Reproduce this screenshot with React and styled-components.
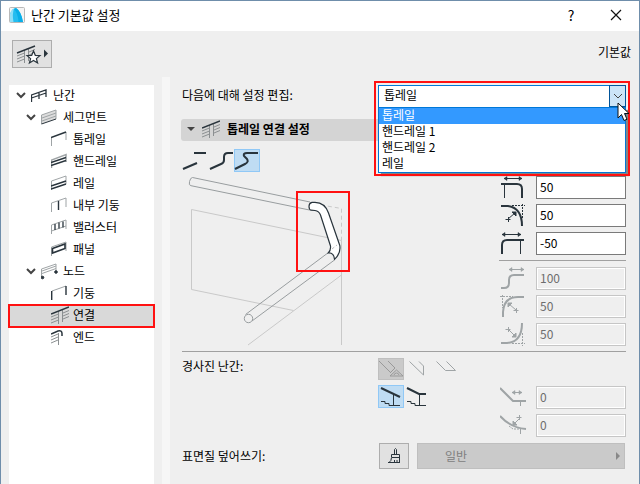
import React, { useState } from "react";
import styled, { createGlobalStyle, css } from "styled-components";

const GlobalStyle = createGlobalStyle`
  *, *::before, *::after { box-sizing: border-box; }
  body {
    margin: 0;
    background: #efefef;
    color: #000;
    font: 12px/16px "Noto Sans CJK KR", "Noto Sans", sans-serif;
  }
  button, input, select { font: inherit; color: inherit; margin: 0; }
`;

const DialogWindow = styled.div`
  display: flex;
  flex-direction: column;
  min-height: 100vh;
  border: 1px solid #6f8eab;
  border-bottom: 0;
  background: #efefef;
`;

const TitleBar = styled.header`
  display: flex;
  align-items: center;
  height: 30px;
  padding: 0 8px 2px;
  gap: 6px;
  background: #fff;
`;

const Title = styled.h1`
  flex: 1;
  margin: 0;
  font-size: 13px;
  line-height: 18px;
  font-weight: 400;
`;

const CaptionButton = styled.button`
  display: flex;
  align-items: center;
  justify-content: center;
  width: 30px;
  height: 28px;
  margin-left: 9px;
  padding: 0;
  border: 0;
  background: transparent;
  font-size: 14px;
`;

const Toolbar = styled.div`
  display: flex;
  align-items: flex-start;
  justify-content: space-between;
  height: 46px;
  padding: 9px 8px 0 11px;
`;

const FavoriteButton = styled.button`
  width: 40px;
  height: 28px;
  padding: 0;
  border: 1px solid #adadad;
  background: #e1e1e1;
  svg { display: block; margin: -1px; }
`;

const DefaultLabel = styled.span`
  padding-top: 4px;
`;

const Body = styled.div`
  display: flex;
  flex: 1;
`;

const Tree = styled.nav`
  flex: 0 0 145px;
  margin: 8px 8px 0;
  background: #fff;
`;

const TreeRow = styled.button`
  display: flex;
  align-items: center;
  width: 100%;
  height: 22px;
  padding: 0 0 3px ${(p) => 7 + p.$level * 10}px;
  border: 0;
  text-align: left;
  background: ${(p) => (p.$selected ? "#d9d9d9" : "transparent")};
  ${(p) => p.$selected && css`
    outline: 2px solid #f11;
    outline-offset: -1px;
  `}
`;

const Chevron = styled.span`
  display: flex;
  width: 10px;
  margin-right: 5px;
`;

const TreeLabel = styled.span`
  margin-left: 4px;
`;

const Splitter = styled.div`
  flex: 0 0 8px;
  background: #f6f6f6;
`;

const Content = styled.main`
  flex: 1;
  min-width: 0;
  padding: 8px 13px 0 11px;
`;

const FormRow = styled.div`
  display: flex;
  justify-content: space-between;
  align-items: center;
  padding-left: 1px;
`;

const Label = styled.label`
  padding-bottom: ${(p) => p.$bottom || 0}px;
`;

const ComboBox = styled.div`
  position: relative;
  width: 248px;
  height: 22px;
`;

const ComboSelect = styled.select`
  appearance: none;
  display: block;
  width: 100%;
  height: 23px;
  padding: 0 24px 3px 5px;
  border: 1px solid #0078d7;
  border-radius: 0;
  background: #fff;
  outline: 0;
`;

const ComboArrow = styled.span`
  position: absolute;
  top: 0;
  right: 0;
  display: flex;
  align-items: center;
  justify-content: center;
  width: 17px;
  height: 22px;
  border: 1px solid #005499;
  background: #cce4f7;
  pointer-events: none;
`;

const ComboList = styled.ul`
  position: absolute;
  z-index: 1;
  top: 22px;
  left: 0;
  right: 0;
  margin: 0;
  padding: 0;
  border: 1px solid #0078d7;
  background: #fff;
  box-shadow: 3px 3px 1px #858585;
  list-style: none;
`;

const ComboOption = styled.li`
  height: 16px;
  padding-left: 3px;
  line-height: 13px;
  color: ${(p) => (p.$selected ? "#fff" : "#000")};
  background: ${(p) => (p.$selected ? "#3399ff" : "#fff")};
`;

const Callout = styled.div`
  position: absolute;
  z-index: 2;
  inset: -4px -4px -69px;
  border: 2px solid #f11;
  pointer-events: none;
`;

const Pointer = styled.svg`
  position: absolute;
  z-index: 3;
  top: 17px;
  right: -4px;
  pointer-events: none;
`;

const SectionHeader = styled.button`
  display: flex;
  align-items: center;
  width: 100%;
  height: 22px;
  margin-top: 12px;
  padding: 0 6px 2px;
  gap: 7px;
  border: 0;
  border-radius: 3px;
  background: #d4d4d4;
  text-align: left;
  font-weight: 700;
`;

const Columns = styled.div`
  display: flex;
  justify-content: space-between;
  padding: ${(p) => p.$top}px 0 5px 1px;
`;

const ButtonRow = styled.div`
  display: flex;
  margin-bottom: ${(p) => p.$gap || 0}px;
`;

const ToggleButton = styled.button`
  width: 26px;
  height: ${(p) => p.$height || 23}px;
  padding: 0;
  border: 1px solid ${(p) => (p.$state === "on" ? "#90c8f6" : p.$state === "off" ? "#bfbfbf" : "transparent")};
  background: ${(p) => (p.$state === "on" ? "#bfdcf3" : p.$state === "off" ? "#cacaca" : "transparent")};
  svg { display: block; margin: -1px; }
`;

const Preview = styled.svg`
  display: block;
`;

const Fields = styled.div`
  display: flex;
  flex-direction: column;
  gap: 5px;
  width: 127px;
  padding-top: ${(p) => p.$top}px;
`;

const Field = styled.label`
  display: flex;
  justify-content: space-between;
  height: 23px;
  svg { flex: none; margin-left: 1px; }
`;

const NumberInput = styled.input`
  width: 90px;
  height: 23px;
  padding: 0 3px 3px;
  border: 1px solid #7a7a7a;
  border-radius: 0;
  background: #fff;
  &:disabled {
    border-color: #c6c6c6;
    background: #efefef;
    color: #6d6d6d;
    box-shadow: inset 0 0 0 1px #fff;
  }
`;

const Divider = styled.hr`
  width: calc(100% - ${(p) => p.$inset || 0}px);
  height: 1px;
  margin: 0 0 0 ${(p) => p.$inset || 0}px;
  border: 0;
  background: #a0a0a0;
`;

const FieldDivider = styled(Divider)`
  margin-bottom: 1px;
`;

const SlopeControls = styled.div`
  display: flex;
  justify-content: space-between;
  width: 248px;
`;

const SurfaceControls = styled.div`
  display: flex;
  gap: 8px;
  width: 248px;
  padding: 1px 1px 0;
`;

const BrushButton = styled.button`
  width: 30px;
  height: 26px;
  padding: 0;
  border: 1px solid #adadad;
  background: #e1e1e1;
  svg { display: block; margin: -1px; }
`;

const SurfaceButton = styled.button`
  display: flex;
  align-items: center;
  justify-content: space-between;
  flex: 1;
  height: 26px;
  padding: 0 3px 0 27px;
  border: 1px solid #bfbfbf;
  background: #cacaca;
  &:disabled { color: #808080; }
`;

const D = "#29343c";
const G = "#9fa4a6";

function Svg({ w, h, color = D, children }) {
  return (
    <svg width={w} height={h} viewBox={`0 0 ${w} ${h}`} fill="none" stroke={color} aria-hidden="true">
      {children}
    </svg>
  );
}

function JoinDrawing({ hatch = "#8b8f91" }) {
  return (
    <>
      <path stroke={hatch} d="M0 11l7.500-3M0 14l7.500-3M0 17l7.500-3M7.500 5v13M11.500 4v12M12 7l6-2.500M12 10l6-2.500M12 13l6-2.500" />
      <path stroke={D} strokeWidth="1.500" d="M0 8L18 1" />
    </>
  );
}

const treeIcons = {
  rail: <path strokeWidth="1.300" d="M.5 16V9L15 4v7M.5 12L15 7M8 6v7" />,
  segment: (
    <>
      <path stroke={G} fill="#ddd" d="M.5 16V7L15 2v9" />
      <path stroke={G} d="M1 10l14-5M1 13l14-5" />
      <path d="M.5 16L15 11" />
    </>
  ),
  top: (
    <>
      <path stroke={G} d="M.5 16V8M15 2v8" />
      <path strokeWidth="1.500" d="M0 7.500L15 2" />
    </>
  ),
  hand: (
    <>
      <path stroke={G} strokeWidth="1.500" d="M.5 16V8L15 2.500V10" />
      <path strokeWidth="1.400" d="M0 10.500L15 5.500M0 13.500L15 8.500" />
    </>
  ),
  bar: (
    <>
      <path stroke={G} d="M.5 16V7L15 2v8" />
      <path strokeWidth="1.400" d="M0 12L15 7M0 15L15 10" />
    </>
  ),
  inner: (
    <>
      <path stroke={G} d="M.5 16V7L15 2v9" />
      <path strokeWidth="1.400" d="M7.500 5v9" />
    </>
  ),
  baluster: (
    <>
      <path stroke={G} d="M.5 16V7L15 2v9M.5 13L15 8" />
      <path strokeWidth="1.300" d="M4 6v6M8 4.500v6M12 3.500v6" />
    </>
  ),
  panel: (
    <>
      <path stroke={G} d="M.5 16V7L15 2v9" />
      <path strokeWidth="1.600" d="M1.500 8.500L14 4v4.500L1.500 13z" />
    </>
  ),
  node: (
    <>
      <path stroke={G} d="M.5 15V7L15 2v8M1 9l14-5M1 11.500l14-5" />
      <circle cx="1.500" cy="15.500" r="1.300" fill={D} />
      <circle cx="15" cy="10" r="1.300" fill={D} />
    </>
  ),
  post: (
    <>
      <path stroke={G} d="M1 7L15 2" />
      <path strokeWidth="1.400" d="M.7 16V7M15 2v9" />
    </>
  ),
  join: <JoinDrawing />,
  end: (
    <>
      <path stroke="#8b8f91" d="M0 9l7-3M0 12l7-3M0 15l7-3M7.500 5v12" />
      <path strokeWidth="1.500" d="M0 6l7-3q4-1 4 2.500V8" />
    </>
  ),
};

const treeItems = [
  [0, "rail", "난간"],
  [1, "segment", "세그먼트"],
  [2, "top", "톱레일"],
  [2, "hand", "핸드레일"],
  [2, "bar", "레일"],
  [2, "inner", "내부 기둥"],
  [2, "baluster", "밸러스터"],
  [2, "panel", "패널"],
  [1, "node", "노드"],
  [2, "post", "기둥"],
  [2, "join", "연결"],
  [2, "end", "엔드"],
];

const doubleArrow = (a, b, y) => (
  <>
    <path d={`M${a} ${y}H${b}`} />
    <path
      d={`M${a + 3} ${y - 2}v4L${a} ${y}zM${b - 3} ${y - 2}v4L${b} ${y}z`}
      fill="currentColor"
      strokeWidth=".5"
    />
  </>
);

const connectionFields = [
  {
    name: "수평 길이 1",
    value: "50",
    icon: (
      <>
        {doubleArrow(4, 22, 2.5)}
        <path strokeWidth="2" d="M1 8H17q5 0 5 5v9" />
        <path d="M4.500 8v14" />
      </>
    ),
  },
  {
    name: "반경",
    value: "50",
    icon: (
      <>
        <path strokeWidth="2" d="M1 2h7q14 2 14 20" />
        <path strokeDasharray="2 1" d="M12 1.500h13M22.500 0v14" />
        <path d="M8 15l7-6M5.500 15.500h5M8.500 13v5" />
        <path fill="currentColor" d="M12 8h4v4z" />
      </>
    ),
  },
  {
    name: "수평 길이 2",
    value: "-50",
    icon: (
      <>
        {doubleArrow(2, 21, 2.5)}
        <path strokeWidth="2" d="M2 22v-9q0-5 5-5h17" />
        <path d="M20.500 8v14" />
      </>
    ),
  },
];

const curveFields = [
  {
    name: "S자 길이",
    value: "100",
    icon: (
      <>
        {doubleArrow(9, 24, 2.5)}
        <path strokeWidth="2" d="M1 21h3q5 0 5-5v-3q0-5 5-5h10" />
      </>
    ),
  },
  {
    name: "상단 반경",
    value: "50",
    icon: (
      <>
        <path strokeWidth="2" d="M3 22v-5Q4 2 18 2h6" />
        <path strokeDasharray="2 1" d="M0 1.500h13M2.500 0v13" />
        <path d="M9 9l7 6M13.500 15.500h5M16.500 13v5" />
        <path fill="currentColor" d="M8 8h4l-4 4z" />
      </>
    ),
  },
  {
    name: "하단 반경",
    value: "50",
    icon: (
      <>
        <path strokeWidth="2" d="M1 20h6Q22 19 22 0" />
        <path strokeDasharray="2 1" d="M12 20.500h13M22.500 10v13" />
        <path d="M8 6l7 7M5.500 6.500h5M8.500 4v5" />
        <path fill="currentColor" d="M16 10v4h-4z" />
      </>
    ),
  },
];

const slopeFields = [
  {
    name: "경사 길이",
    value: "0",
    icon: (
      <>
        <path strokeWidth="2" d="M0 2l13 13h13" />
        <path d="M20.500 15v5" />
        {doubleArrow(12, 22, 6.5)}
      </>
    ),
  },
  {
    name: "경사 반경",
    value: "0",
    icon: (
      <>
        <path strokeWidth="2" d="M0 2q11 12 26 13" />
        <path d="M20.500 15v5M21 3l-7 7M16.500 3.500h5M19.500 1v5" />
        <path fill="currentColor" d="M13 7v4h4z" />
        <path strokeDasharray="2 1" d="M9 12l4 3h8" />
      </>
    ),
  },
];

function FieldRow({ field, disabled }) {
  const color = disabled ? G : D;
  return (
    <Field>
      <svg width="28" height="23" viewBox="0 0 28 23" fill="none" stroke={color} color={color} aria-hidden="true">
        {field.icon}
      </svg>
      <NumberInput aria-label={field.name} defaultValue={field.value} disabled={disabled} />
    </Field>
  );
}

const railOptions = ["톱레일", "핸드레일 1", "핸드레일 2", "레일"];

function RailPicker() {
  const [value, setValue] = useState(railOptions[0]);
  return (
    <ComboBox>
      <ComboSelect id="rail" value={value} onChange={(e) => setValue(e.target.value)}>
        {railOptions.map((o) => <option key={o}>{o}</option>)}
      </ComboSelect>
      <ComboArrow>
        <Svg w={10} h={8} color="#444"><path d="M1 2l4 4 4-4" /></Svg>
      </ComboArrow>
      <ComboList role="listbox" aria-label="레일 선택">
        {railOptions.map((o) => (
          <ComboOption key={o} role="option" aria-selected={o === value} $selected={o === value} onClick={() => setValue(o)}>
            {o}
          </ComboOption>
        ))}
      </ComboList>
      <Callout />
      <Pointer width="13" height="20" viewBox="0 0 13 20" aria-hidden="true">
        <path d="M1 1v15l3.500-3.500L7 18.500l3-1.200-2.500-5.800H12z" fill="#fff" stroke="#111" />
      </Pointer>
    </ComboBox>
  );
}

function RailPreview() {
  return (
    <Preview width="170" height="174" viewBox="182 172 170 174" fill="none" role="img" aria-label="톱레일 연결 미리보기">
      <g stroke="#c9c9c9">
        <path d="M293.500 310.500L191.500 289.500V209.500L341.500 240.500V345M341.500 275L248 345" />
        <path strokeDasharray="4 3" d="M321 205l20.500 3.500v32" />
      </g>
      <g stroke="#989d9f">
        <path d="M310 202L192.500 177.500q-2 0-3 4t1.500 4.200L309.500 210" />
        <path d="M328.500 252.500L245.500 314.500M334.500 260L252 321" />
        <circle cx="248.500" cy="318.500" r="4.200" />
      </g>
      <path
        d="M312 202.300Q309 203 309 206.300T311 210.200L315 210.500Q319 211 320.500 215L330.500 246Q331 250 328.300 253Q334 252.500 334.500 259.300Q341 253.500 339.800 245.500L328.500 213Q325 202.500 315 202.300Z"
        fill="#fff"
        stroke={D}
        strokeWidth="1.200"
      />
      <path stroke="#bbb" strokeDasharray="3 2" d="M332 249l5-4" />
      <path stroke="#f11" strokeWidth="2" d="M297 192h52v79h-52z" />
    </Preview>
  );
}

export default function App() {
  const [selected, setSelected] = useState("연결");
  return (
    <>
      <GlobalStyle />
      <DialogWindow>
        <TitleBar>
          <svg width="16" height="16" viewBox="0 0 16 16" aria-hidden="true">
            <rect x=".5" y=".5" width="15" height="15" rx="1" fill="#f4f4f4" stroke="#b9b9b9" />
            <path d="M1 15V7Q3 1 7 1q5 3 7 14z" fill="#24bdf0" />
            <path d="M1 15V7Q2 3 5 1.500Q3 7 4.500 15z" fill="#8ddff8" />
            <path d="M7 1q5 3 7 14H9.500Q9 6 5 2z" fill="#08aee8" />
          </svg>
          <Title>난간 기본값 설정</Title>
          <CaptionButton aria-label="도움말">?</CaptionButton>
          <CaptionButton aria-label="닫기">
            <Svg w={12} h={12} color="#111"><path strokeWidth="1.200" d="M1 1l10 10M11 1L1 11" /></Svg>
          </CaptionButton>
        </TitleBar>
        <Toolbar>
          <FavoriteButton aria-label="즐겨찾기">
            <Svg w={40} h={28}>
              <g transform="translate(5 5)"><JoinDrawing /></g>
              <path fill="#fff" strokeWidth="1.200" d="M21.500 11l1.800 4.300 4.700.3-3.600 3 1.200 4.400-4.100-2.500-4.100 2.500 1.200-4.400-3.600-3 4.700-.3z" />
              <path fill={D} stroke="none" d="M32 9.500v8l4-4z" />
            </Svg>
          </FavoriteButton>
          <DefaultLabel>기본값</DefaultLabel>
        </Toolbar>
        <Body>
          <Tree aria-label="난간 설정">
            {treeItems.map(([level, icon, label]) => (
              <TreeRow key={label} $level={level} $selected={label === selected} onClick={() => setSelected(label)}>
                <Chevron>
                  {level < 2 && <Svg w={10} h={8} color="#444"><path strokeWidth="2" d="M1 2l4 4 4-4" /></Svg>}
                </Chevron>
                <Svg w={18} h={18}>{treeIcons[icon]}</Svg>
                <TreeLabel>{label}</TreeLabel>
              </TreeRow>
            ))}
          </Tree>
          <Splitter />
          <Content>
            <FormRow>
              <Label htmlFor="rail" $bottom={3}>다음에 대해 설정 편집:</Label>
              <RailPicker />
            </FormRow>
            <SectionHeader aria-expanded="true">
              <Svg w={8} h={8} color="none"><path fill="#444" d="M0 2h8L4 6z" /></Svg>
              <Svg w={18} h={18}><JoinDrawing /></Svg>
              <span>톱레일 연결 설정</span>
            </SectionHeader>
            <Columns $top={8}>
              <div>
                <ButtonRow>
                  <ToggleButton aria-label="분리">
                    <Svg w={26} h={23}><path strokeWidth="2" d="M1 20l14-6M12 4h12" /></Svg>
                  </ToggleButton>
                  <ToggleButton aria-label="수직 연결">
                    <Svg w={26} h={23}><path strokeWidth="2" d="M2 20l11-5q3-1 3-4V8q0-4 4-4h5" /></Svg>
                  </ToggleButton>
                  <ToggleButton aria-label="곡선 연결" $state="on">
                    <Svg w={26} h={23}><path strokeWidth="2" d="M1 20l10-5q4-2 2-5l-3-3q-1-3 3-3h11" /></Svg>
                  </ToggleButton>
                </ButtonRow>
                <RailPreview />
              </div>
              <Fields $top={27}>
                {connectionFields.map((f) => <FieldRow key={f.name} field={f} />)}
                <FieldDivider />
                {curveFields.map((f) => <FieldRow key={f.name} field={f} disabled />)}
              </Fields>
            </Columns>
            <Divider $inset={1} />
            <Columns $top={6}>
              <Label as="span">경사진 난간:</Label>
              <SlopeControls>
                <div>
                  <ButtonRow $gap={5}>
                    <ToggleButton aria-label="각도 유지" $state="off" $height={22} disabled>
                      <Svg w={26} h={22} color="#999">
                        <path d="M1 3l12 12M10 3l7 7-5 5M12 18l6.500-6 6.500 6zM16 17q.5-2 2.500-2t2.500 2" />
                      </Svg>
                    </ToggleButton>
                    <ToggleButton aria-label="수직 절단" $height={22} disabled>
                      <Svg w={26} h={22} color={G}><path d="M5.500 3.500l14 13.500V8L15 3.500" /></Svg>
                    </ToggleButton>
                    <ToggleButton aria-label="수평 절단" $height={22} disabled>
                      <Svg w={27} h={22} color={G}><path d="M6.500 3.500l9 9h10l-9-9" /></Svg>
                    </ToggleButton>
                  </ButtonRow>
                  <ButtonRow>
                    <ToggleButton aria-label="계단 경사 연결" $state="on">
                      <Svg w={26} h={23}>
                        <path strokeWidth="2" d="M3 3l19 9" />
                        <path d="M15.500 8v12M3 16.500h4v2h4v2h11" />
                      </Svg>
                    </ToggleButton>
                    <ToggleButton aria-label="계단 수평 연결">
                      <Svg w={26} h={23}>
                        <path strokeWidth="2" d="M3 3l12 6h7" />
                        <path d="M15.500 8v12M3 16.500h4v2h4v2h11" />
                      </Svg>
                    </ToggleButton>
                  </ButtonRow>
                </div>
                <Fields $top={28}>
                  {slopeFields.map((f) => <FieldRow key={f.name} field={f} disabled />)}
                </Fields>
              </SlopeControls>
            </Columns>
            <FormRow>
              <Label as="span">표면질 덮어쓰기:</Label>
              <SurfaceControls>
                <BrushButton aria-label="표면질 덮어쓰기">
                  <Svg w={30} h={26}>
                    <path d="M15.500 11V6.500q1-2 2 0V11M12.500 11.500h8V19.500H10q2.500-1.500 2.500-5zM13 14.500h7.500M9 19.500h12M15.500 19v-2M18 19v-2" />
                  </Svg>
                </BrushButton>
                <SurfaceButton disabled>
                  <span>일반</span>
                  <Svg w={5} h={8} color="none"><path fill="#888" d="M0 0v8l4-4z" /></Svg>
                </SurfaceButton>
              </SurfaceControls>
            </FormRow>
          </Content>
        </Body>
      </DialogWindow>
    </>
  );
}
